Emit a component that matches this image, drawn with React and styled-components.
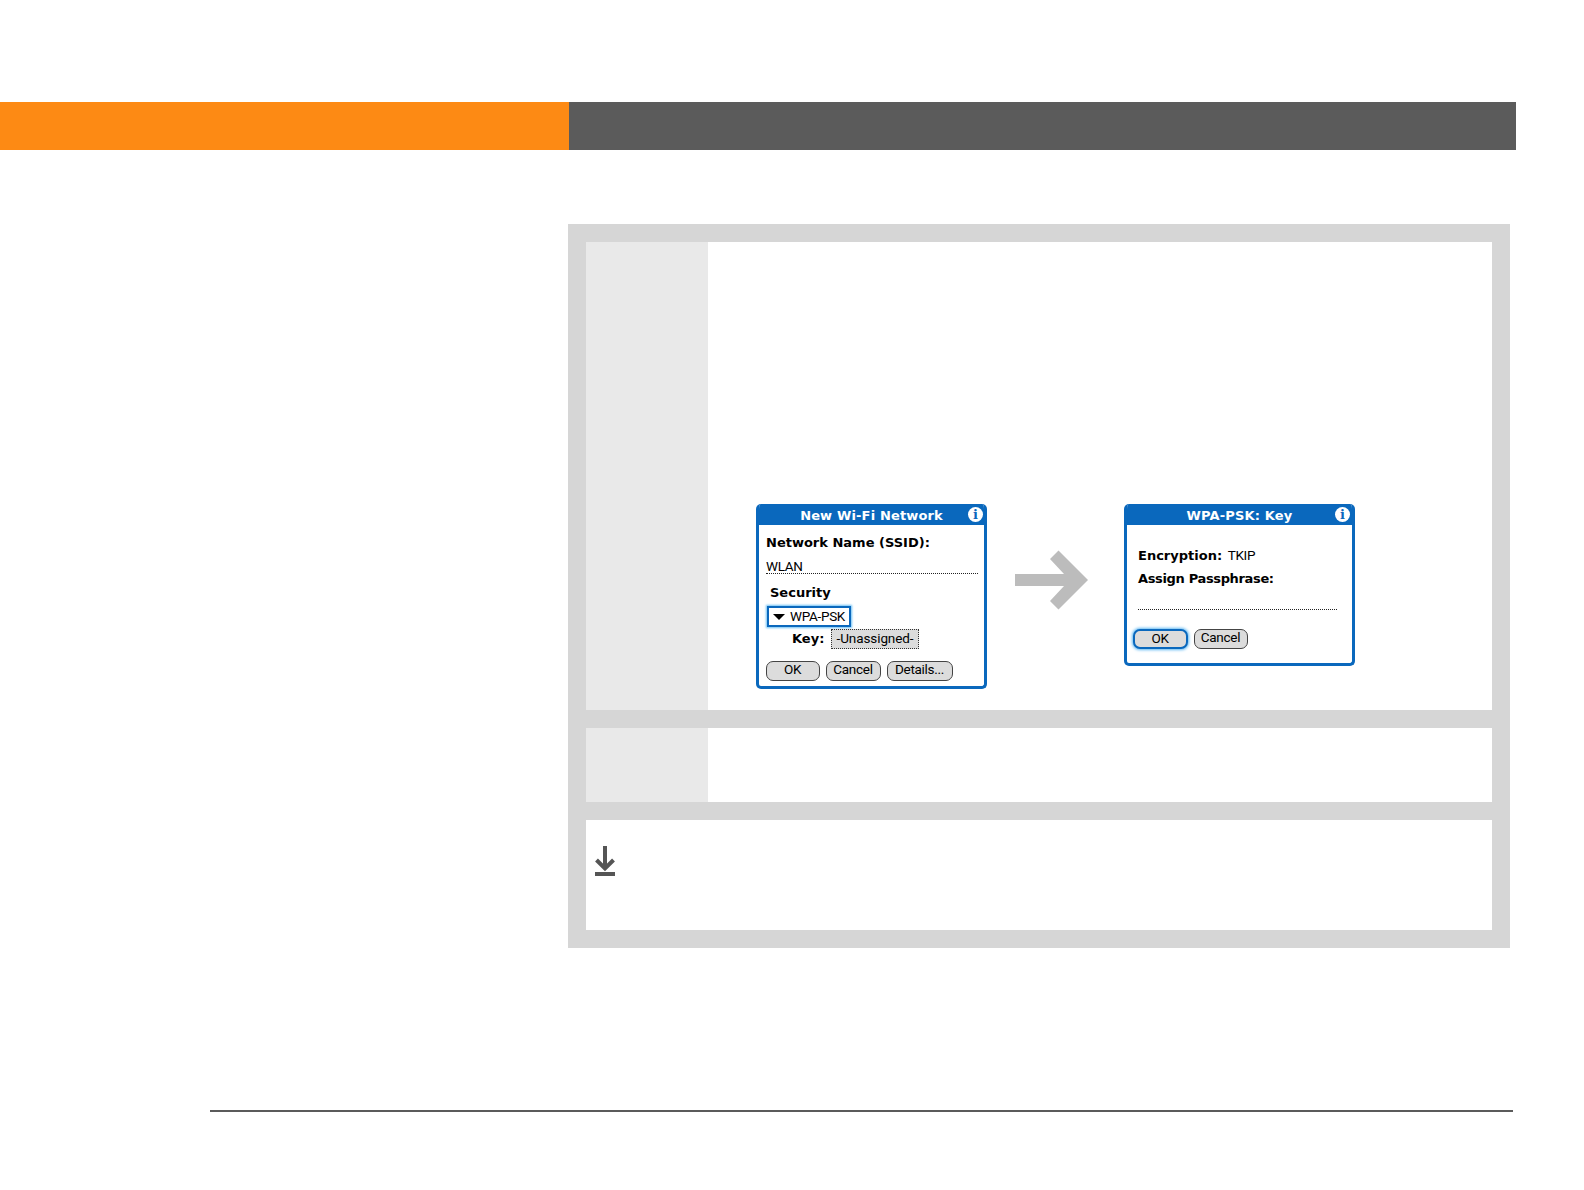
import React from 'react';
import styled, { createGlobalStyle } from 'styled-components';

const Global = createGlobalStyle`
  html, body { margin: 0; padding: 0; background: #fff; }
  body { font-family: "Liberation Sans", Arial, sans-serif; }
`;

const Page = styled.div`
  width: 1584px;
  height: 1190px;
  padding-top: 102px;
  box-sizing: border-box;
  overflow: hidden;
`;

const HeaderBar = styled.div`
  display: flex;
  width: 1516px;
  height: 48px;
`;

const HeaderTitle = styled.div`
  width: 569px;
  background: #fd8a14;
`;

const HeaderRest = styled.div`
  flex: 1;
  background: #5b5b5b;
`;

const Panel = styled.div`
  display: flex;
  flex-direction: column;
  gap: 18px;
  width: 942px;
  margin: 74px 0 0 568px;
  padding: 18px;
  box-sizing: border-box;
  background: #d6d6d6;
`;

const StepRow = styled.div`
  display: flex;
  height: ${props => props.height}px;
  background: #fff;
`;

const StepNumber = styled.div`
  width: 122px;
  flex-shrink: 0;
  background: #e9e9e9;
`;

const StepBody = styled.div`
  flex: 1;
  display: flex;
  align-items: flex-start;
  padding: 262px 0 0 48px;
`;

const TipRow = styled.div`
  height: 110px;
  padding: 26px 0 0 9px;
  box-sizing: border-box;
  background: #fff;
`;

const Dialog = styled.div`
  width: 231px;
  height: ${props => props.height}px;
  flex-shrink: 0;
  box-sizing: border-box;
  border: 3px solid #0a68bd;
  border-top: 0;
  border-radius: 5px;
  background: #fff;
  color: #000;
  overflow: hidden;
`;

const TitleBar = styled.div`
  position: relative;
  height: 21px;
  margin: 0 -3px;
  background: #0a68bd;
  color: #fff;
  font: bold 13px/23px "DejaVu Sans", sans-serif;
  letter-spacing: 0.15px;
  text-align: center;
  white-space: nowrap;
`;

const InfoBadge = styled.span`
  position: absolute;
  right: ${props => props.$right}px;
  top: 3px;
  width: 15px;
  height: 15px;
  border-radius: 50%;
  background: #fff;
  color: #0a68bd;
  font: bold 13px/15px "DejaVu Serif", serif;
  letter-spacing: 0;
  text-align: center;
`;

const DialogBody = styled.div`
  display: flex;
  flex-direction: column;
  padding: ${props => props.$top}px 0 0 ${props => props.$left}px;
`;

const Label = styled.div`
  height: ${props => props.$h || 18}px;
  margin-top: ${props => props.$top || 0}px;
  margin-left: ${props => props.$indent || 0}px;
  font: bold 13px/18px "DejaVu Sans", sans-serif;
  letter-spacing: ${props => props.$tight || 0}px;
  white-space: nowrap;
`;

const PlainText = styled.span`
  margin-left: 1px;
  font: 400 13.5px/18px "Roboto", sans-serif;
  letter-spacing: -0.3px;
`;

const FieldLine = styled.div`
  width: ${props => props.width}px;
  height: 15px;
  margin-top: ${props => props.$top || 0}px;
  border-bottom: 1px dotted #222;
  font: 400 13.5px/16px "Roboto", sans-serif;
  letter-spacing: -0.3px;
`;

const DropdownBox = styled.div`
  display: flex;
  align-items: center;
  gap: 5px;
  width: 84px;
  height: 21px;
  margin: 6px 0 0 1px;
  padding-left: 4px;
  box-sizing: border-box;
  border: 2px solid #0a68bd;
  box-shadow: 0 0 2px 1px #6cc0f5;
  font: 400 13.5px/17px "Roboto", sans-serif;
  letter-spacing: -0.3px;
  white-space: nowrap;
`;

const Caret = styled.span`
  width: 0;
  height: 0;
  border-left: 6px solid transparent;
  border-right: 6px solid transparent;
  border-top: 6px solid #000;
`;

const KeyRow = styled.div`
  display: flex;
  align-items: center;
  height: 20px;
  margin: 2px 0 0 26px;
`;

const KeyLabel = styled.span`
  width: 39px;
  font: bold 13px/18px "DejaVu Sans", sans-serif;
`;

const SelectorValue = styled.span`
  width: 88px;
  height: 20px;
  box-sizing: border-box;
  border: 1px dotted #333;
  background: #dcdcdc;
  font: 400 13.5px/17px "Roboto", sans-serif;
  letter-spacing: -0.1px;
  text-align: center;
  white-space: nowrap;
`;

const ButtonRow = styled.div`
  display: flex;
  gap: 6px;
  margin: ${props => props.$top}px 0 0 ${props => props.$left || 0}px;
`;

const PalmButton = styled.div`
  width: ${props => props.width}px;
  height: 20px;
  padding-right: 1px;
  box-sizing: border-box;
  border: ${props => (props.$focused ? '2px solid #0a68bd' : '1.5px solid #444')};
  border-radius: 7px;
  background: #dcdcdc;
  box-shadow: ${props => (props.$focused ? '0 0 3px 1px #5fb8f2' : 'none')};
  font: 400 13.5px/15px "Roboto", sans-serif;
  letter-spacing: -0.3px;
  text-align: center;
`;

const ArrowSvg = styled.svg`
  flex-shrink: 0;
  margin: 46px 36px 0 28px;
`;

const TipIcon = styled.svg`
  display: block;
`;

const FooterRule = styled.div`
  width: 1303px;
  height: 2px;
  margin: 162px 0 0 210px;
  background: #5b5b5b;
`;

export default function App() {
  return (
    <Page>
      <Global />
      <HeaderBar>
        <HeaderTitle />
        <HeaderRest />
      </HeaderBar>

      <Panel>
        <StepRow height={468}>
          <StepNumber />
          <StepBody>
            <Dialog height={185}>
              <TitleBar>
                New Wi-Fi Network
                <InfoBadge $right={4}>i</InfoBadge>
              </TitleBar>
              <DialogBody $top={9} $left={7}>
                <Label>Network Name (SSID):</Label>
                <FieldLine width={212} $top={6}>WLAN</FieldLine>
                <Label $indent={4} $h={16} $top={10}>Security</Label>
                <DropdownBox>
                  <Caret />
                  WPA-PSK
                </DropdownBox>
                <KeyRow>
                  <KeyLabel>Key:</KeyLabel>
                  <SelectorValue>-Unassigned-</SelectorValue>
                </KeyRow>
                <ButtonRow $top={12}>
                  <PalmButton width={54}>OK</PalmButton>
                  <PalmButton width={55}>Cancel</PalmButton>
                  <PalmButton width={66}>Details...</PalmButton>
                </ButtonRow>
              </DialogBody>
            </Dialog>

            <ArrowSvg width="73" height="60" viewBox="0 0 73 60">
              <path d="M0 24H49L35 9L43.5 0.5L73 30L43.5 59.5L35 51L49 36H0Z" fill="#bcbcbc" />
            </ArrowSvg>

            <Dialog height={162}>
              <TitleBar>
                WPA-PSK: Key
                <InfoBadge $right={5}>i</InfoBadge>
              </TitleBar>
              <DialogBody $top={21} $left={11}>
                <Label>
                  Encryption: <PlainText>TKIP</PlainText>
                </Label>
                <Label $top={6} $tight={-0.35}>Assign Passphrase:</Label>
                <FieldLine width={199} $top={6} />
                <ButtonRow $top={19} $left={-5}>
                  <PalmButton width={55} $focused>OK</PalmButton>
                  <PalmButton width={54}>Cancel</PalmButton>
                </ButtonRow>
              </DialogBody>
            </Dialog>
          </StepBody>
        </StepRow>

        <StepRow height={74}>
          <StepNumber />
        </StepRow>

        <TipRow>
          <TipIcon width="21" height="30" viewBox="0 0 21 30">
            <path d="M10 0V23M1.5 14L10 22.5L18.5 14" fill="none" stroke="#555" strokeWidth="4" />
            <rect x="0" y="26" width="20" height="4" fill="#555" />
          </TipIcon>
        </TipRow>
      </Panel>

      <FooterRule />
    </Page>
  );
}
